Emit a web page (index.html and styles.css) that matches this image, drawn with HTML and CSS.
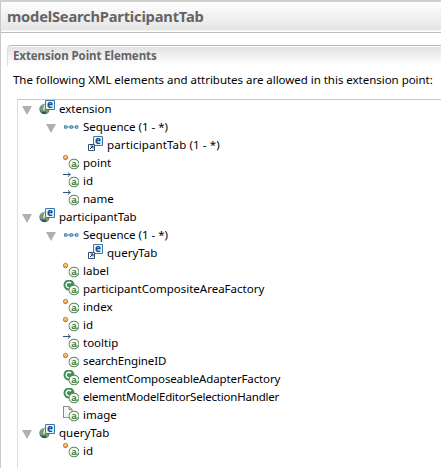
FILE: index.html
```
<!DOCTYPE html>
<html lang="en">
<head>
<meta charset="utf-8">
<title>modelSearchParticipantTab</title>
<link rel="stylesheet" href="styles.css">
</head>
<body>
<svg class="defs" width="0" height="0">
  <defs>
    <linearGradient id="orange" x2="0" y2="1"><stop offset="0" stop-color="#ffe39a"/><stop offset="1" stop-color="#f0942b"/></linearGradient>
    <radialGradient id="globe" cx=".4" cy=".35"><stop offset="0" stop-color="#c9e4ea"/><stop offset=".6" stop-color="#6ba5c0"/><stop offset="1" stop-color="#3d6385"/></radialGradient>
    <symbol id="e" viewBox="0 0 10 10"><path d="M.5.5h9v9h-9z" fill="#e9f3fb" stroke="#3a78b0"/><text x="5" y="7.8" class="e-letter">e</text></symbol>
    <symbol id="at" viewBox="0 0 11 11"><ellipse cx="5.5" cy="5.5" rx="5.1" ry="4.9" fill="#f2faef" stroke="#397a42"/><text x="5.3" y="8" class="a-letter">a</text><path d="M7.3 7.5Q8.5 8.500 9.600 7" fill="none" stroke="#397a42" stroke-width=".9"/></symbol>
    <symbol id="element" viewBox="0 0 16 16">
      <circle cx="5.5" cy="9" r="5.2" fill="url(#globe)"/>
      <path d="M1 7l3-2 2 1-1 3-2 1 1 2-2-1zM7 10l3 0-1 3-2 1z" fill="#7c9b49"/><path d="M5 5l2-1 0 5-3 1z" fill="#e4e7b5"/><path d="M3 12l4 1" stroke="#284768"/>
      <use href="#e" x="6" y="0" width="10" height="10"/>
    </symbol>
    <symbol id="ref" viewBox="0 0 16 16"><use href="#e" x="6" y="0" width="10" height="10"/><path d="M1.5 8.5h6v6h-6z" fill="#fff" stroke="#345071"/><path d="M3 13l3-3M3.5 10h2.5v2.5" fill="none" stroke="#172f50"/></symbol>
    <symbol id="seq" viewBox="0 0 16 16"><path d="M2 9h12" stroke="#5b91b7"/><path d="M1.5 7.8h2.400v2.400h-2.400zM7 7.8h2.400v2.400h-2.400zM12.500 7.8h2.400v2.400h-2.400z" fill="#b8dcf0" stroke="#3f7fad"/></symbol>
    <symbol id="required" viewBox="0 0 16 16"><circle cx="2.5" cy="3.5" r="2.2" fill="url(#orange)" stroke="#b87420" stroke-width=".9"/><use href="#at" x="5.5" y="4.500" width="11" height="11"/></symbol>
    <symbol id="attr" viewBox="0 0 16 16"><path d="M0 2.5h7.500M4.8.3L7.2 2.5 4.8 4.7" fill="none" stroke="#34527f"/><use href="#at" x="5.5" y="4.500" width="11" height="11"/></symbol>
    <symbol id="java" viewBox="0 0 16 16"><circle cx="6" cy="5" r="5.5" fill="#3f9159"/><path d="M8 3.2A2.8 2.8 0 1 0 8 7" fill="none" stroke="#fff" stroke-width="1.4"/><use href="#at" x="5.5" y="4.500" width="11" height="11"/></symbol>
    <symbol id="resource" viewBox="0 0 16 16"><path d="M.5.5h5.5l3 3v8h-8.500z" fill="#f5f7fc" stroke="#b1924e"/><path d="M.5 12V.5H6" fill="none" stroke="#7c8ca8"/><path d="M6 .5v3h3z" fill="#efd795" stroke="#b1924e"/><use href="#at" x="5.5" y="4.500" width="11" height="11"/></symbol>
  </defs>
</svg>
<div class="form">
  <h1><span>modelSearchParticipantTab</span></h1>
  <section>
    <h2><span>Extension Point Elements</span></h2>
    <p>The following XML elements and attributes are allowed in this extension point:</p>
    <div class="tree">
      <div class="row l1"><i class="open"></i><svg><use href="#element"/></svg><span>extension</span></div>
      <div class="row l2"><i class="open"></i><svg><use href="#seq"/></svg><span>Sequence (1 - *)</span></div>
      <div class="row l3"><i></i><svg><use href="#ref"/></svg><span class="wide">participantTab (1 - *)</span></div>
      <div class="row l2"><i></i><svg><use href="#required"/></svg><span>point</span></div>
      <div class="row l2"><i></i><svg><use href="#attr"/></svg><span>id</span></div>
      <div class="row l2"><i></i><svg><use href="#attr"/></svg><span>name</span></div>
      <div class="row l1"><i class="open"></i><svg><use href="#element"/></svg><span>participantTab</span></div>
      <div class="row l2"><i class="open"></i><svg><use href="#seq"/></svg><span>Sequence (1 - *)</span></div>
      <div class="row l3"><i></i><svg><use href="#ref"/></svg><span>queryTab</span></div>
      <div class="row l2"><i></i><svg><use href="#required"/></svg><span>label</span></div>
      <div class="row l2"><i></i><svg><use href="#java"/></svg><span>participantCompositeAreaFactory</span></div>
      <div class="row l2"><i></i><svg><use href="#required"/></svg><span>index</span></div>
      <div class="row l2"><i></i><svg><use href="#required"/></svg><span>id</span></div>
      <div class="row l2"><i></i><svg><use href="#attr"/></svg><span>tooltip</span></div>
      <div class="row l2"><i></i><svg><use href="#required"/></svg><span class="snug">searchEngineID</span></div>
      <div class="row l2"><i></i><svg><use href="#java"/></svg><span class="snug">elementComposeableAdapterFactory</span></div>
      <div class="row l2"><i></i><svg><use href="#java"/></svg><span class="tight">elementModelEditorSelectionHandler</span></div>
      <div class="row l2"><i></i><svg><use href="#resource"/></svg><span>image</span></div>
      <div class="row l1"><i class="open"></i><svg><use href="#element"/></svg><span>queryTab</span></div>
      <div class="row l2"><i></i><svg><use href="#required"/></svg><span>id</span></div>
    </div>
  </section>
</div>
</body>
</html>
```
FILE: styles.css
```
* { box-sizing: border-box; }
body { margin: 0; background: #fff; color: #000; font: 11.5px/18px "Noto Sans", "Open Sans", sans-serif; overflow: hidden; }
.defs { display: block; height: 0; }
.form { height: 468px; border-left: 1px solid #c8c8c8; border-top: 2px solid #cfcfcf; white-space: nowrap; overflow: hidden; }
h1 { margin: 0; height: 31px; padding-left: 6px; border-bottom: 1px solid #bcbcbc; background: linear-gradient(#fefefe, #e5e5e5 28px, #fff 29px); color: #646464; font-size: 14.7px; line-height: 29px; letter-spacing: -.2px; }
section { margin: 12px 0 0 6px; }
h2 { margin: 0; height: 21px; padding-left: 5px; color: #646464; font-size: 11.5px; line-height: 19px; letter-spacing: -.08px; border: solid #b8b8b8; border-width: 1px 0 0 1px; border-top-left-radius: 4px; background: linear-gradient(#fff 1px, #e2e2e2 1px, #fff 19px); border-left-color: #dedede; }
p { margin: 4px 0 0 6px; height: 29px; line-height: 20px; letter-spacing: -.03px; }
.tree { margin-left: 10px; border: solid #dedede; border-width: 1px 0 0 1px; border-top-color: #c5c5c5; height: 400px; }
.row { display: flex; height: 18px; }
.row svg { width: 16px; height: 16px; margin-right: 4px; flex: none; overflow: visible; }
.row i { width: 17px; flex: none; }
.row .open::before { content: ""; display: block; width: 10px; height: 9px; margin-top: 6px; background: #b0b0b0; clip-path: polygon(0 0, 100% 0, 50% 100%); }
.l1 { padding-left: 4px; }
.l2 { padding-left: 28px; }
.l3 { padding-left: 52px; }
.wide { letter-spacing: .12px; }
.snug { letter-spacing: -.13px; }
.tight { letter-spacing: -.2px; }
.e-letter { font: bold 10px "Noto Sans", sans-serif; fill: #174c87; text-anchor: middle; }
.a-letter { font: 600 9px "Noto Sans", sans-serif; fill: #2f7039; text-anchor: middle; }
```
